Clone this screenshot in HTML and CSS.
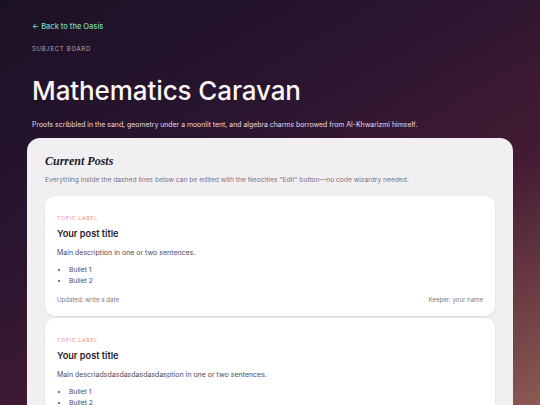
FILE: index.html
```html
<!DOCTYPE html>
<html lang="en">
<head>
<meta charset="utf-8">
<title>Mathematics Caravan</title>
<link rel="stylesheet" href="styles.css">
</head>
<body>
<div class="page">
  <header class="hero">
    <a class="back" href="#">← Back to the Oasis</a>
    <p class="eyebrow">SUBJECT BOARD</p>
    <h1 class="title">Mathematics Caravan</h1>
    <p class="lede">Proofs scribbled in the sand, geometry under a moonlit tent, and algebra charms borrowed from Al-Khwarizmi himself.</p>
  </header>
  <main class="panel">
    <h2 class="panel-title">Current Posts</h2>
    <p class="panel-note">Everything inside the dashed lines below can be edited with the Neocities "Edit" button—no code wizardry needed.</p>
    <div class="posts">
      <article class="post">
        <p class="topic">TOPIC LABEL</p>
        <h3 class="post-title">Your post title</h3>
        <p class="post-desc">Main description in one or two sentences.</p>
        <ul class="bullets">
          <li>Bullet 1</li>
          <li>Bullet 2</li>
        </ul>
        <div class="meta">
          <span>Updated: write a date</span>
          <span>Keeper: your name</span>
        </div>
      </article>
      <article class="post">
        <p class="topic">TOPIC LABEL</p>
        <h3 class="post-title">Your post title</h3>
        <p class="post-desc">Main descriadsdasdasdasdasdasption in one or two sentences.</p>
        <ul class="bullets">
          <li>Bullet 1</li>
          <li>Bullet 2</li>
        </ul>
        <div class="meta">
          <span>Updated: write a date</span>
          <span>Keeper: your name</span>
        </div>
      </article>
    </div>
  </main>
</div>
</body>
</html>
```
FILE: styles.css
```css
html, body {
  margin: 0;
  padding: 0;
  height: 100%;
  overflow: hidden;
}
body {
  font-family: Inter, "Noto Sans", sans-serif;
  background: linear-gradient(150deg, #1b1124 0%, #2a1530 35%, #441b33 65%, #8c5a52 100%);
  background-attachment: fixed;
  color: #fff;
}
.page {
  padding: 0 27px;
}
.hero {
  padding: 22px 5px 0;
}
.back {
  display: block;
  color: #76dcb6;
  font-size: 7.5px;
  font-weight: 500;
  text-decoration: none;
  line-height: 10px;
}
.eyebrow {
  margin: 12px 0 0;
  font-size: 6px;
  letter-spacing: 0.7px;
  color: #b3a9b6;
  line-height: 10px;
}
.title {
  margin: 19px 0 0;
  font-size: 26px;
  font-weight: 500;
  line-height: 36px;
  letter-spacing: -0.1px;
  color: #fbf6f4;
}
.lede {
  margin: 11px 0 0;
  font-size: 6.9px;
  line-height: 10px;
  color: #e4dce6;
}
.panel {
  margin-top: 8px;
  background: #f1eff2;
  border-radius: 13px;
  padding: 16px 18px 18px;
}
.panel-title {
  margin: 0;
  font-family: "Liberation Serif", "DejaVu Serif", serif;
  font-style: italic;
  font-weight: 700;
  font-size: 12px;
  line-height: 14px;
  color: #1e1a24;
}
.panel-note {
  margin: 7px 0 0;
  font-size: 6.7px;
  line-height: 10px;
  color: #7a7480;
}
.posts {
  margin-top: 11px;
  display: flex;
  flex-direction: column;
  gap: 2px;
}
.post {
  background: #fff;
  border-radius: 10px;
  padding: 18px 12px 11px;
  box-shadow: 0 1px 2px rgba(60, 40, 60, 0.12);
}
.topic {
  margin: 0;
  font-size: 5.2px;
  letter-spacing: 0.7px;
  color: #e7928b;
  line-height: 8px;
}
.post-title {
  margin: 6px 0 0;
  font-size: 9.2px;
  font-weight: 600;
  line-height: 12px;
  color: #26222c;
}
.post-desc {
  margin: 8px 0 0;
  font-size: 7px;
  line-height: 10px;
  color: #4f4a55;
}
.bullets {
  margin: 6px 0 0;
  padding-left: 12px;
  font-size: 6.8px;
  line-height: 11px;
  color: #4f4a55;
}
.meta {
  margin-top: 9px;
  display: flex;
  justify-content: space-between;
  font-size: 6.1px;
  line-height: 10px;
  color: #7d7783;
}
```
